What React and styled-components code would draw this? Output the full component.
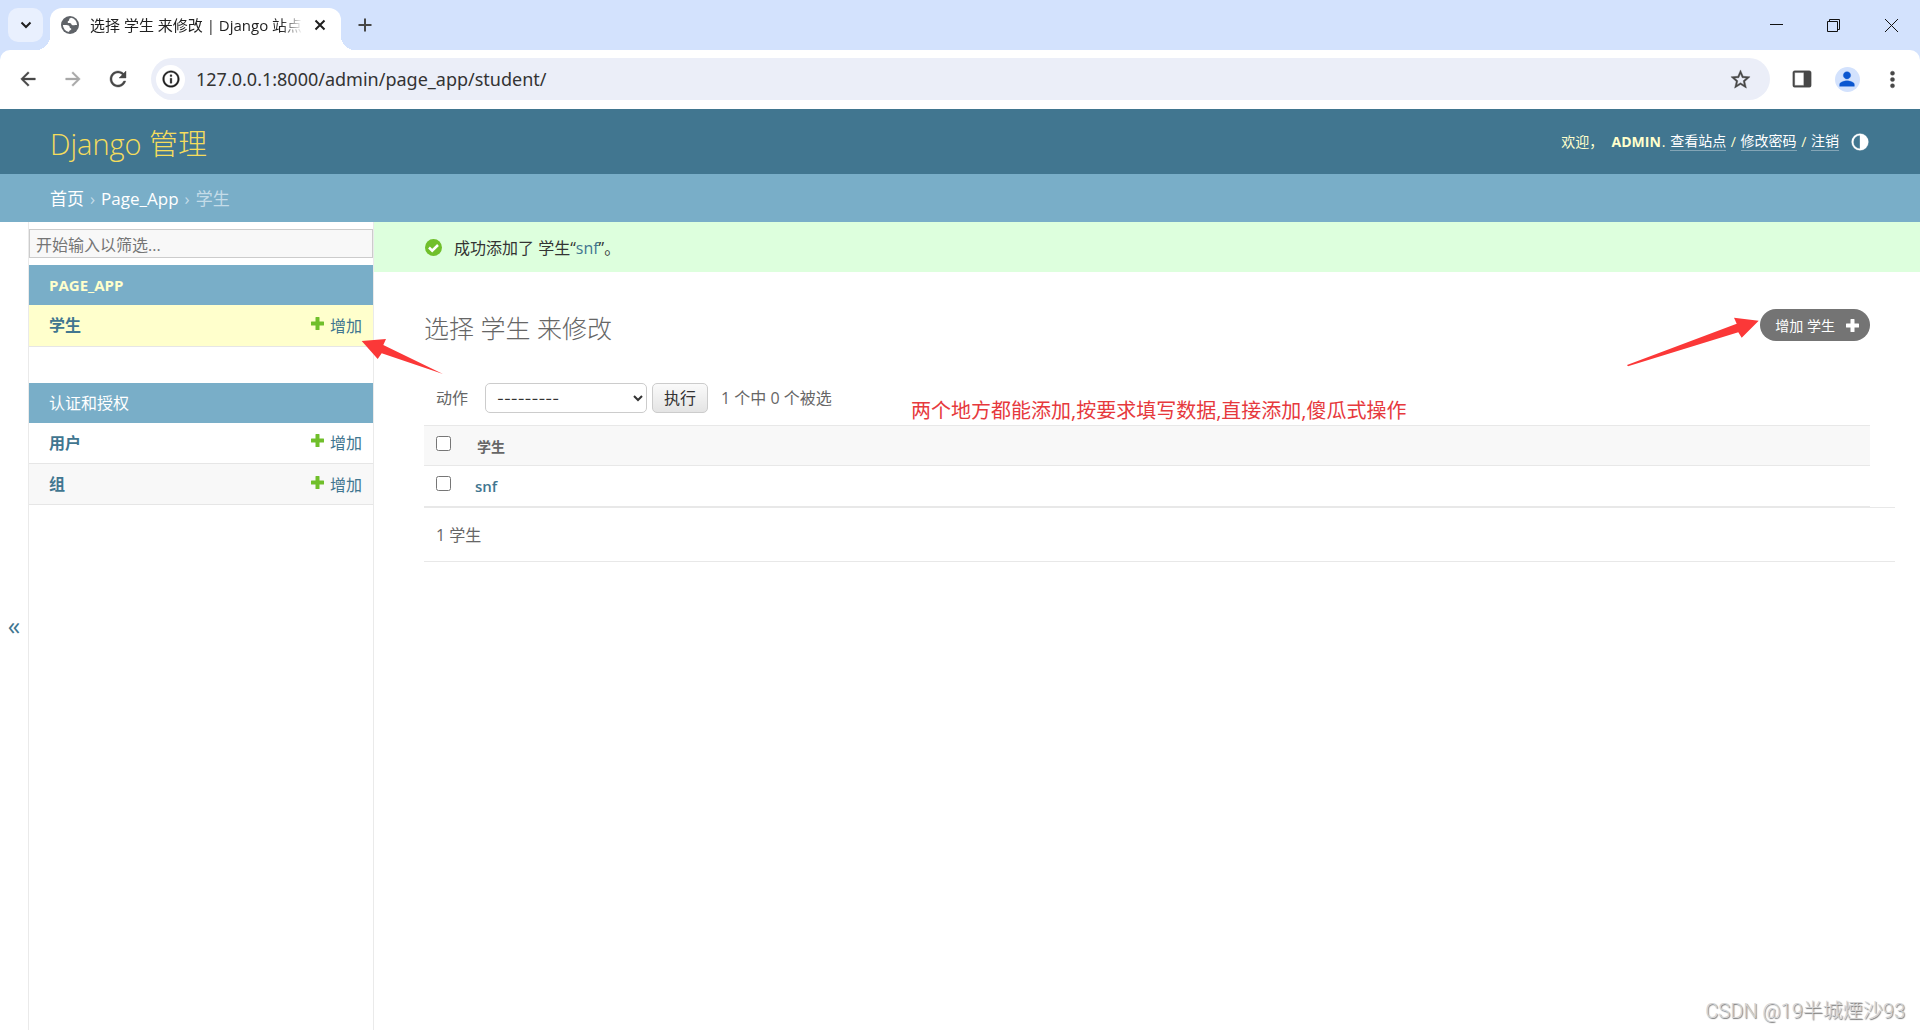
import React, { useState } from "react";
import styled, { createGlobalStyle } from "styled-components";

const GlobalStyle = createGlobalStyle`
    * {
        box-sizing: border-box;
    }

    body {
        margin: 0;
        background: #fff;
        color: #333;
        font-family: "Open Sans", "Noto Sans CJK SC", sans-serif;
        font-size: 16px;
    }

    button, input, select {
        font-family: inherit;
    }
`;

const Window = styled.div`
    min-height: 100vh;
    display: flex;
    flex-direction: column;
`;

/* ---------- browser chrome ---------- */

const TabStrip = styled.div`
    height: 50px;
    display: flex;
    align-items: center;
    background-color: #d3e2fd;
    padding-left: 8px;
`;

const IconButton = styled.button`
    display: flex;
    flex: none;
    align-items: center;
    justify-content: center;
    width: ${(props) => props.$width || 32}px;
    height: ${(props) => props.$height || 32}px;
    padding: 0;
    border: 0;
    border-radius: ${(props) => props.$radius || 0}px;
    background: ${(props) => props.$background || "transparent"};
    color: ${(props) => props.$color || "#474747"};
    cursor: pointer;
`;

const Tab = styled.div`
    position: relative;
    align-self: flex-end;
    display: flex;
    align-items: center;
    width: 291px;
    height: 42px;
    margin: 0 8px 0 7px;
    padding: 0 8px 8px 11px;
    border-radius: 12px 12px 0 0;
    background-color: #fff;

    &::before,
    &::after {
        content: "";
        position: absolute;
        bottom: 0;
        width: 14px;
        height: 14px;
    }

    &::before {
        right: 100%;
        background: radial-gradient(circle at 0 0, transparent 14px, #fff 14px);
    }

    &::after {
        left: 100%;
        background: radial-gradient(circle at 100% 0, transparent 14px, #fff 14px);
    }
`;

const TabTitle = styled.span`
    flex: 1;
    margin-left: 11px;
    white-space: nowrap;
    color: #1f1f1f;
    font-size: 15px;
    line-height: 24px;
    mask-image: linear-gradient(to right, #000 88%, transparent 98%);
`;

const WindowButtons = styled.div`
    display: flex;
    margin-left: auto;
`;

const ToolbarBack = styled.div`
    background-color: #d3e2fd;
`;

const Toolbar = styled.div`
    height: 59px;
    display: flex;
    align-items: center;
    padding: 0 12px 1px;
    border-radius: 10px 10px 0 0;
    background-color: #fff;
`;

const NavButtons = styled.div`
    display: flex;
    gap: 13px;
    margin-right: 17px;
`;

const AddressBar = styled.div`
    flex: 1;
    height: 42px;
    display: flex;
    align-items: center;
    padding: 0 14px 0 5px;
    border-radius: 21px;
    background-color: #ebeef8;
`;

const AddressInput = styled.input`
    flex: 1;
    margin-left: 11px;
    padding: 0;
    border: 0;
    outline: 0;
    background: transparent;
    color: #333;
    font-family: "Noto Sans", sans-serif;
    font-size: 18px;
    line-height: 28px;
`;

const ToolbarActions = styled.div`
    display: flex;
    gap: 13px;
    margin-left: 16px;
`;

const Avatar = styled.span`
    display: flex;
    align-items: center;
    justify-content: center;
    width: 25px;
    height: 25px;
    border-radius: 50%;
    background-color: #d3e2fd;
    color: #0b57d0;
`;

/* ---------- admin header ---------- */

const Header = styled.header`
    min-height: 65px;
    display: flex;
    align-items: center;
    justify-content: space-between;
    padding: 0 50px;
    background-color: #417690;
    color: #ffc;
`;

const Branding = styled.h1`
    margin: 4px 0 0;
    color: #f5dd5d;
    font-size: 29px;
    font-weight: 300;
    line-height: 40px;
`;

const UserTools = styled.div`
    display: flex;
    align-items: center;
    gap: 1px;
    font-size: 14px;
    line-height: 20px;
    white-space: pre;
`;

const UserLink = styled.a`
    border-bottom: 1px solid rgba(255, 255, 255, 0.35);
    color: #fff;
    line-height: 18px;
    text-decoration: none;
`;

const ThemeButton = styled(IconButton)`
    margin-left: 10px;
`;

const Breadcrumbs = styled.nav`
    min-height: 48px;
    display: flex;
    align-items: center;
    gap: 6px;
    padding: 2px 50px 0;
    background-color: #79aec8;
    color: #c4dce8;
    font-size: 17px;
    line-height: 24px;
`;

const Crumb = styled.a`
    color: #fff;
    text-decoration: none;
`;

/* ---------- sidebar ---------- */

const Main = styled.div`
    position: relative;
    flex: 1;
    display: flex;
`;

const SidebarToggle = styled.button`
    width: 29px;
    padding: 0 0 2px;
    border: 0;
    border-right: 1px solid #eaeaea;
    background-color: #fff;
    color: #417690;
    font-size: 25px;
    cursor: pointer;
`;

const Sidebar = styled.nav`
    width: 345px;
    flex: none;
    padding-top: 7px;
    border-right: 1px solid #eaeaea;
`;

const FilterInput = styled.input`
    display: block;
    width: 100%;
    height: 29px;
    margin-bottom: 7px;
    padding: 4px 6px 2px;
    border: 1px solid #ccc;
    background-color: #f8f8f8;
    font-size: 16px;

    &::placeholder {
        color: #757575;
    }
`;

const Module = styled.table`
    width: 100%;
    margin-bottom: 36px;
    border-collapse: collapse;
`;

const ModuleCaption = styled.caption`
    padding: 0 20px;
    background-color: #79aec8;
    color: ${(props) => (props.$current ? "#ffc" : "#fff")};
    font-size: ${(props) => (props.$current ? 15 : 16)}px;
    font-weight: ${(props) => (props.$current ? 700 : 400)};
    line-height: 40px;
    text-align: left;
    text-transform: uppercase;
`;

const ModelRow = styled.tr`
    height: 41px;
    border-bottom: 1px solid #e6e6e6;
    background-color: ${(props) => props.$background};
`;

const ModelName = styled.th`
    padding: 0 20px;
    font-weight: 600;
    text-align: left;
`;

const AddCell = styled.td`
    padding: 0 11px;
    text-align: right;
`;

const Link = styled.a`
    color: #417690;
    line-height: 24px;
    text-decoration: none;
`;

const AddLink = styled(Link)`
    display: inline-flex;
    align-items: center;
    gap: 6px;

    svg {
        margin-bottom: 5px;
    }
`;

/* ---------- content ---------- */

const Content = styled.main`
    flex: 1;
    min-width: 0;
`;

const Message = styled.div`
    display: flex;
    align-items: center;
    gap: 12px;
    height: 50px;
    padding: 0 51px;
    background-color: #dfd;
`;

const ContentInner = styled.div`
    padding: 37px 50px 0;
`;

const TitleRow = styled.div`
    display: flex;
    align-items: flex-start;
    justify-content: space-between;
`;

const PageTitle = styled.h2`
    margin: 0;
    color: #666;
    font-size: 25px;
    font-weight: 300;
    line-height: 38px;
`;

const AddButton = styled.a`
    display: flex;
    align-items: center;
    gap: 11px;
    height: 32px;
    padding: 0 11px 0 15px;
    border-radius: 16px;
    background-color: #747474;
    color: #fff;
    font-size: 14px;
    text-decoration: none;
`;

const Actions = styled.form`
    position: relative;
    display: flex;
    align-items: center;
    margin: 36px 0 12px;
    padding-left: 12px;
    color: #666;
    line-height: 24px;
`;

const ActionLabel = styled.label`
    display: flex;
    align-items: center;
    gap: 17px;
`;

const ActionSelect = styled.select`
    width: 162px;
    height: 30px;
    margin-right: 5px;
    padding: 0 7px;
    border: 1px solid #ccc;
    border-radius: 5px;
    background-color: #fff;
    color: #333;
    font-family: Inter, "Noto Sans CJK SC", sans-serif;
    font-size: 15px;
`;

const GoButton = styled.button`
    height: 30px;
    margin-right: 13px;
    padding: 0 11px;
    border: 1px solid #ccc;
    border-radius: 5px;
    background: linear-gradient(#fafafa, #e4e4e4);
    color: #333;
    font-size: 16px;
    line-height: 24px;
`;

const Results = styled.table`
    width: 100%;
    border-collapse: collapse;
`;

const ResultRow = styled.tr`
    height: ${(props) => (props.$head ? 40 : 41)}px;
    border-top: 1px solid #e8e8e8;
    border-bottom: 1px solid #e8e8e8;
    background-color: ${(props) => (props.$head ? "#f8f8f8" : "#fff")};
`;

const CheckCell = styled.td`
    width: 51px;
    padding: 0 0 5px 12px;
`;

const Checkbox = styled.input`
    display: block;
    width: 15px;
    height: 15px;
    margin: 0;
`;

const HeadCell = styled.th`
    padding: 0 2px;
    color: #666;
    font-size: 14px;
    font-weight: 600;
    text-align: left;
`;

const NameCell = styled.th`
    padding: 0;
    font-size: 15px;
    font-weight: 600;
    text-align: left;
`;

const Paginator = styled.p`
    margin: 0 -25px 0 0;
    padding: 15px 12px 14px;
    border-top: 1px solid #e8e8e8;
    border-bottom: 1px solid #e8e8e8;
    color: #666;
    line-height: 24px;
`;

/* ---------- notes over the page ---------- */

const LeftArrow = styled.svg`
    position: absolute;
    top: 116px;
    left: 360px;
`;

const RightArrow = styled.svg`
    position: absolute;
    top: 94px;
    right: 160px;
`;

const Note = styled.span`
    position: absolute;
    top: 16px;
    left: 487px;
    color: #e6393d;
    font-size: 20px;
    line-height: 24px;
    white-space: nowrap;
`;

const Watermark = styled.span`
    position: absolute;
    right: 15px;
    bottom: 5px;
    color: #d4d4d4;
    font-family: Roboto, "Noto Sans CJK SC", sans-serif;
    font-size: 20px;
    font-weight: 300;
    line-height: 28px;
    text-shadow: 1px 1px 1px #777;
`;

const paths = {
    back: "M20 11H7.83l5.59-5.59L12 4l-8 8 8 8 1.41-1.41L7.83 13H20v-2z",
    forward: "M12 4l-1.41 1.41L16.17 11H4v2h12.17l-5.58 5.59L12 20l8-8z",
    reload: "M17.65 6.35C16.2 4.9 14.21 4 12 4c-4.42 0-7.99 3.58-7.99 8s3.57 8 7.99 8c3.73 0 6.84-2.55 7.73-6h-2.08c-.82 2.33-3.04 4-5.65 4-3.31 0-6-2.69-6-6s2.69-6 6-6c1.66 0 3.14.69 4.22 1.78L13 11h7V4l-2.35 2.35z",
    info: "M11 7h2v2h-2zm0 4h2v6h-2zm1-9C6.48 2 2 6.48 2 12s4.48 10 10 10 10-4.48 10-10S17.52 2 12 2zm0 18c-4.41 0-8-3.59-8-8s3.59-8 8-8 8 3.59 8 8-3.59 8-8 8z",
    star: "M22 9.24l-7.19-.62L12 2 9.19 8.63 2 9.24l5.46 4.73L5.82 21 12 17.27 18.18 21l-1.63-7.03L22 9.24zM12 15.4l-3.76 2.27 1-4.28-3.32-2.88 4.38-.38L12 6.1l1.71 4.04 4.38.38-3.32 2.88 1 4.28L12 15.4z",
    person: "M12 12c2.21 0 4-1.79 4-4s-1.79-4-4-4-4 1.79-4 4 1.79 4 4 4zm0 2c-2.67 0-8 1.34-8 4v2h16v-2c0-2.66-5.33-4-8-4z",
    more: "M12 8a2 2 0 1 0 0-4 2 2 0 0 0 0 4zm0 6a2 2 0 1 0 0-4 2 2 0 0 0 0 4zm0 6a2 2 0 1 0 0-4 2 2 0 0 0 0 4z",
    panel: "M4 3h16a2 2 0 0 1 2 2v14a2 2 0 0 1-2 2H4a2 2 0 0 1-2-2V5a2 2 0 0 1 2-2zm0 2v14h10V5z",
    contrast: "M12 2a10 10 0 1 0 0 20 10 10 0 0 0 0-20zm0 2v16a8 8 0 0 1 0-16z",
};

function Icon({ name, size }) {
    return (
        <svg width={size} height={size} viewBox="0 0 24 24" fill="currentColor" fillRule="evenodd" stroke="currentColor" strokeWidth="0.4" aria-hidden="true">
            <path d={paths[name]} />
        </svg>
    );
}

function GlobeIcon() {
    return (
        <svg width="18" height="18" viewBox="0 0 18 18" aria-hidden="true">
            <circle cx="9" cy="9" r="9" fill="#5f6368" />
            <path d="M10 1.8c-1 .6-2 1-1.800 2 .1.800-.8 1-1.400 1.600-.5.600.1 1.500 1 1.600 1.200.1 2.300.2 2.600 1.200.3.900 1.200 1.100 2.200 1 .9-.1 1.800-.3 3.500-.3A7.200 7.200 0 0 0 10 1.800z" fill="#fff" />
            <path d="M1.900 9.100c1.800-.3 3.300-.2 4.800.2 1.300.4 2 1 2 2 0 .9.900.9 1.400 1.300.6.6 0 1.400-.8 1.600-.9.3-1.300.9-1.200 1.900A7.200 7.200 0 0 1 1.900 9.100z" fill="#fff" />
        </svg>
    );
}

function PlusIcon({ color }) {
    return (
        <svg width="13" height="13" viewBox="0 0 13 13" fill={color} aria-hidden="true">
            <path d="M5 0h3q.5 0 .5.500v4h4q.5 0 .5.500v3q0 .5-.5.500h-4v4q0 .5-.5.500H5q-.5 0-.5-.5v-4h-4Q0 8.500 0 8V5q0-.5.500-.5h4v-4Q4.500 0 5 0z" />
        </svg>
    );
}

function BrowserBar() {
    return (
        <>
            <TabStrip>
                <IconButton $width={35} $height={34} $radius={10} $background="#e9f0fe" $color="#1f1f1f" aria-label="搜索标签页">
                    <svg width="12" height="8" viewBox="0 0 12 8" fill="none" stroke="currentColor" strokeWidth="2">
                        <path d="M1.500 1.500 6 6l4.500-4.500" />
                    </svg>
                </IconButton>
                <Tab>
                    <GlobeIcon />
                    <TabTitle>选择 学生 来修改 | Django 站点</TabTitle>
                    <IconButton $width={26} $height={26} $color="#1f1f1f" aria-label="关闭标签页">
                        <svg width="12" height="12" viewBox="0 0 12 12" stroke="currentColor" strokeWidth="2">
                            <path d="M1.500 1.500l9 9M10.500 1.500l-9 9" />
                        </svg>
                    </IconButton>
                </Tab>
                <IconButton aria-label="新标签页">
                    <svg width="14" height="14" viewBox="0 0 14 14" stroke="currentColor" strokeWidth="2">
                        <path d="M7 0.500v13M0.500 7h13" />
                    </svg>
                </IconButton>
                <WindowButtons>
                    <IconButton $width={57} $color="#111" aria-label="最小化">
                        <svg width="13" height="13" viewBox="0 0 13 13" stroke="currentColor">
                            <path d="M0 5.500h13" />
                        </svg>
                    </IconButton>
                    <IconButton $width={57} $color="#111" aria-label="还原">
                        <svg width="13" height="13" viewBox="0 0 13 13" stroke="currentColor" fill="none">
                            <path d="M0.500 2.500h10v10h-10zM2.500 2.500v-2h10v10h-2" />
                        </svg>
                    </IconButton>
                    <IconButton $width={58} $color="#111" aria-label="关闭">
                        <svg width="13" height="13" viewBox="0 0 13 13" stroke="currentColor">
                            <path d="M0 0l13 13M13 0L0 13" />
                        </svg>
                    </IconButton>
                </WindowButtons>
            </TabStrip>
            <ToolbarBack>
                <Toolbar>
                    <NavButtons>
                        <IconButton aria-label="后退"><Icon name="back" size={22} /></IconButton>
                        <IconButton $color="#a8a8a8" aria-label="前进"><Icon name="forward" size={22} /></IconButton>
                        <IconButton aria-label="重新加载"><Icon name="reload" size={24} /></IconButton>
                    </NavButtons>
                    <AddressBar>
                        <IconButton $width={29} $height={29} $radius={15} $background="#fff" $color="#1f1f1f" aria-label="网站信息">
                            <Icon name="info" size={20} />
                        </IconButton>
                        <AddressInput aria-label="地址" defaultValue="127.0.0.1:8000/admin/page_app/student/" />
                        <IconButton aria-label="收藏"><Icon name="star" size={23} /></IconButton>
                    </AddressBar>
                    <ToolbarActions>
                        <IconButton aria-label="侧边栏"><Icon name="panel" size={22} /></IconButton>
                        <IconButton aria-label="用户">
                            <Avatar><Icon name="person" size={22} /></Avatar>
                        </IconButton>
                        <IconButton aria-label="更多"><Icon name="more" size={25} /></IconButton>
                    </ToolbarActions>
                </Toolbar>
            </ToolbarBack>
        </>
    );
}

function ModelEntry({ name, background }) {
    return (
        <ModelRow $background={background}>
            <ModelName scope="row"><Link href="#">{name}</Link></ModelName>
            <AddCell>
                <AddLink href="#">
                    <PlusIcon color="#70bf2b" />
                    增加
                </AddLink>
            </AddCell>
        </ModelRow>
    );
}

export default function App() {
    const [checked, setChecked] = useState(false);

    return (
        <Window>
            <GlobalStyle />
            <BrowserBar />
            <Header>
                <Branding>Django 管理</Branding>
                <UserTools>
                    {"欢迎，  "}<strong>ADMIN</strong>{". "}
                    <UserLink href="#">查看站点</UserLink>{" / "}
                    <UserLink href="#">修改密码</UserLink>{" / "}
                    <UserLink href="#">注销</UserLink>
                    <ThemeButton $width={20} $height={20} $color="#fff" aria-label="切换主题">
                        <Icon name="contrast" size={20} />
                    </ThemeButton>
                </UserTools>
            </Header>
            <Breadcrumbs>
                <Crumb href="#">首页</Crumb>
                <span>›</span>
                <Crumb href="#">Page_App</Crumb>
                <span>›</span>
                <span>学生</span>
            </Breadcrumbs>
            <Main>
                <SidebarToggle aria-label="切换导航">«</SidebarToggle>
                <Sidebar>
                    <FilterInput type="search" placeholder="开始输入以筛选..." aria-label="筛选" />
                    <Module>
                        <ModuleCaption $current>Page_App</ModuleCaption>
                        <tbody>
                            <ModelEntry name="学生" background="#ffc" />
                        </tbody>
                    </Module>
                    <Module>
                        <ModuleCaption>认证和授权</ModuleCaption>
                        <tbody>
                            <ModelEntry name="用户" background="#fff" />
                            <ModelEntry name="组" background="#f8f8f8" />
                        </tbody>
                    </Module>
                </Sidebar>
                <Content>
                    <Message>
                        <svg width="17" height="17" viewBox="0 0 17 17" fill="none" aria-hidden="true">
                            <circle cx="8.5" cy="8.5" r="8.5" fill="#70bf2b" />
                            <path d="M4 8.500l3.200 3.200L13 6" stroke="#fff" strokeWidth="2.500" />
                        </svg>
                        <span>成功添加了 学生“<Link href="#">snf</Link>”。</span>
                    </Message>
                    <ContentInner>
                        <TitleRow>
                            <PageTitle>选择 学生 来修改</PageTitle>
                            <AddButton href="#">
                                增加 学生
                                <PlusIcon color="#fff" />
                            </AddButton>
                        </TitleRow>
                        <Actions onSubmit={(e) => e.preventDefault()}>
                            <ActionLabel>
                                动作
                                <ActionSelect>
                                    <option>---------</option>
                                    <option>删除所选的 学生</option>
                                </ActionSelect>
                            </ActionLabel>
                            <GoButton type="submit">执行</GoButton>
                            <span>1 个中 {checked ? 1 : 0} 个被选</span>
                            <Note>两个地方都能添加,按要求填写数据,直接添加,傻瓜式操作</Note>
                        </Actions>
                        <Results>
                            <thead>
                                <ResultRow $head>
                                    <CheckCell>
                                        <Checkbox type="checkbox" aria-label="全选" checked={checked} onChange={() => setChecked(!checked)} />
                                    </CheckCell>
                                    <HeadCell scope="col">学生</HeadCell>
                                </ResultRow>
                            </thead>
                            <tbody>
                                <ResultRow>
                                    <CheckCell>
                                        <Checkbox type="checkbox" aria-label="选择 snf" checked={checked} onChange={() => setChecked(!checked)} />
                                    </CheckCell>
                                    <NameCell scope="row"><Link href="#">snf</Link></NameCell>
                                </ResultRow>
                            </tbody>
                        </Results>
                        <Paginator>1 学生</Paginator>
                    </ContentInner>
                </Content>
                <LeftArrow width="84" height="38" viewBox="0 0 84 38" fill="#fb3838" aria-hidden="true">
                    <path d="M1.700 3 26 1l-2.700 6L83 36 21.700 15.300 17.700 21z" />
                </LeftArrow>
                <RightArrow width="134" height="52" viewBox="0 0 134 52" fill="#fb3838" aria-hidden="true">
                    <path d="M132.700 4.700 108 1.700l2.700 6L1 49 2 50.200 112.300 16.300l3.400 5.400z" />
                </RightArrow>
                <Watermark>CSDN @19半城煙沙93</Watermark>
            </Main>
        </Window>
    );
}
